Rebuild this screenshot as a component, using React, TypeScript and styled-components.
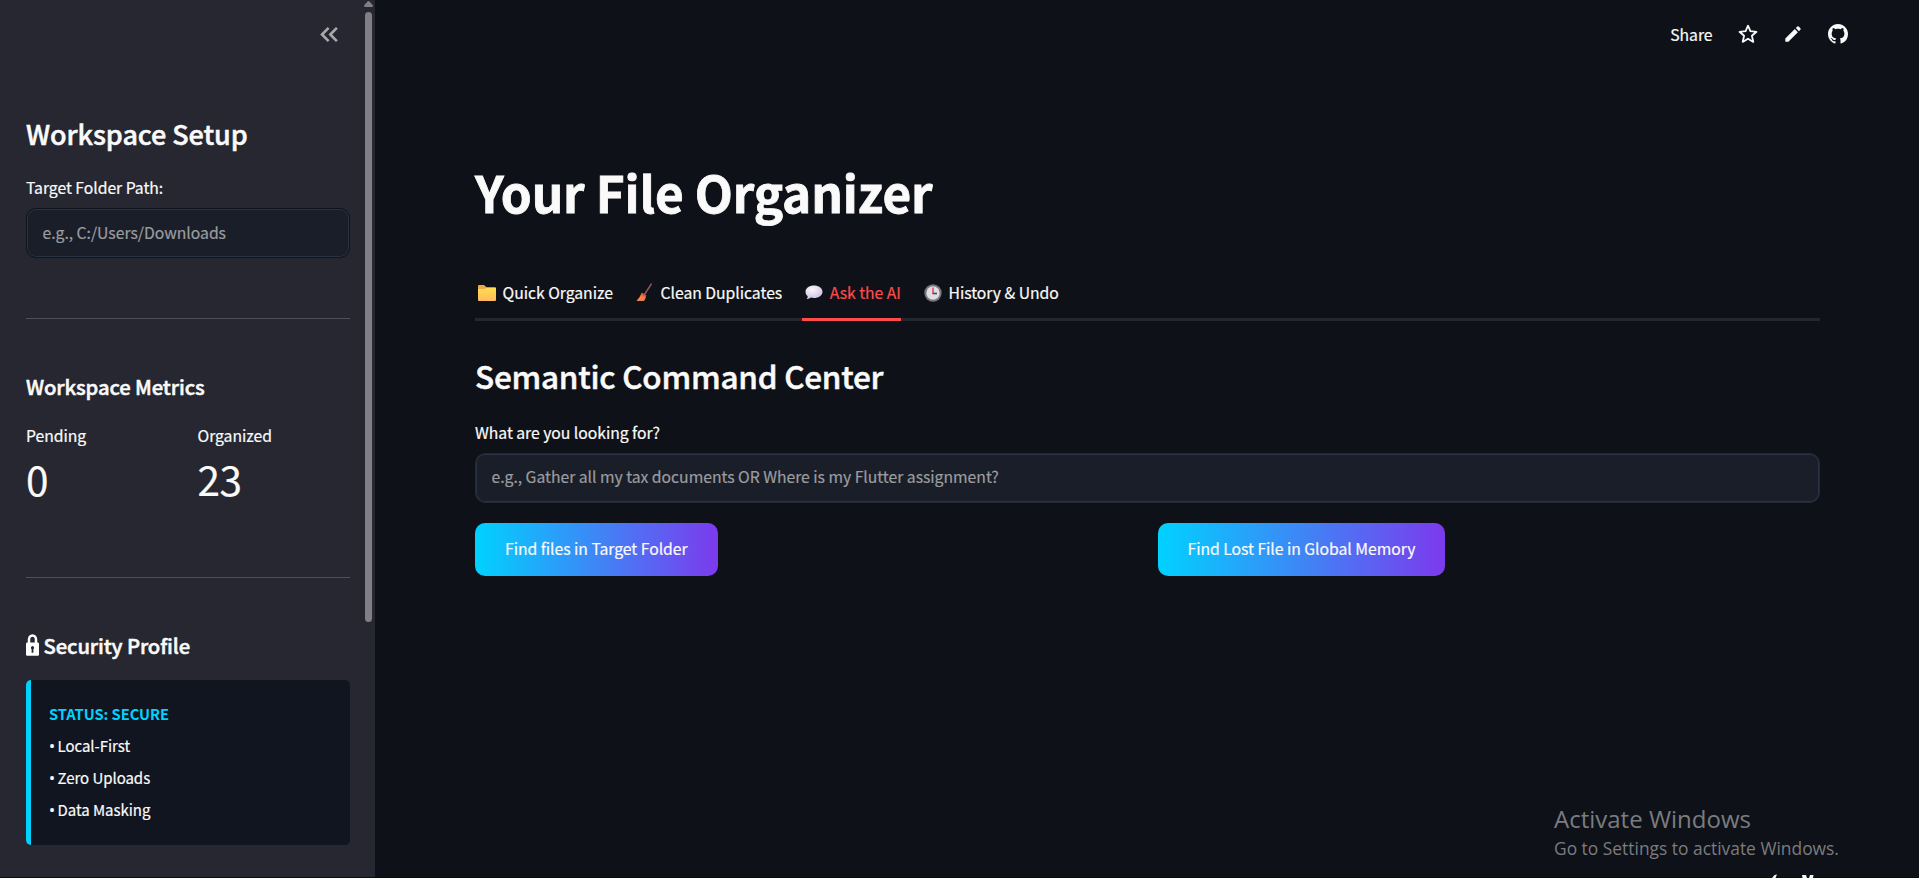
import React from "react";
import styled, { createGlobalStyle, css } from "styled-components";

const GlobalStyle = createGlobalStyle`
  * { box-sizing: border-box; }
  body {
    margin: 0;
    background: #0e1117;
    color: #fafafa;
    font-family: "Noto Sans CJK SC", "Open Sans", sans-serif;
    font-size: 15.75px;
    line-height: 27px;
    letter-spacing: -0.04px;
    -webkit-text-stroke: 0.2px currentColor;
    overflow: hidden;
  }
  h1, h2, h3, p { margin: 0; }
`;

const semibold = css`
  font-weight: 500;
  -webkit-text-stroke: 0.5px currentColor;
`;

const Page = styled.div`
  position: relative;
  display: flex;
  width: 100vw;
  height: 100vh;
  overflow: hidden;
`;

/* ---------- sidebar ---------- */

const Sidebar = styled.aside`
  display: flex;
  flex: 0 0 375px;
  background: #262730;
`;

const SidebarContent = styled.div`
  display: flex;
  flex: 1;
  flex-direction: column;
  padding: 0 14px 0 26px;
`;

const SidebarHeader = styled.div`
  display: flex;
  justify-content: flex-end;
  align-items: flex-start;
  height: 115px;
  padding: 27px 12px 0 0;
`;

const ScrollTrack = styled.div`
  display: flex;
  flex: 0 0 11px;
  flex-direction: column;
  align-items: flex-start;
  padding-top: 1px;
`;

const ScrollThumb = styled.div`
  width: 7px;
  height: 610px;
  margin: 5px 0 0 1px;
  border-radius: 4px;
  background: #7f7f85;
`;

const SidebarTitle = styled.h2`
  ${semibold}
  font-size: 27px;
  line-height: 37px;
  letter-spacing: -0.08px;
  margin-bottom: 22px;
`;

const SidebarHeading = styled.h3`
  ${semibold}
  display: flex;
  align-items: flex-start;
  font-size: 20.25px;
  line-height: 27px;
  letter-spacing: -0.12px;
`;

const Label = styled.label`
  display: block;
  margin-bottom: 7px;
`;

const Field = styled.div<{ $outline: string; $top: number }>`
  height: 50px;
  padding: ${(p) => p.$top}px 14px 0;
  border: 1px solid ${(p) => p.$outline};
  border-radius: 10px;
  background: #1a1e29;
  box-shadow: inset 0 0 0 1px #2a3344;
`;

const Input = styled.input`
  display: block;
  width: 100%;
  height: 27px;
  padding: 0 0 0 1.5px;
  border: 0;
  outline: 0;
  background: transparent;
  color: #fafafa;
  font: inherit;
  letter-spacing: -0.03px;
  &::placeholder {
    color: #9b9c9f;
    opacity: 1;
  }
`;

const Divider = styled.hr<{ $above: number; $below: number }>`
  width: 100%;
  height: 1px;
  margin: ${(p) => p.$above}px 0 ${(p) => p.$below}px;
  border: 0;
  background: #4d4e56;
`;

const Metrics = styled.div`
  display: grid;
  grid-template-columns: 1fr 1fr;
  column-gap: 19px;
  margin-top: 22px;
`;

const MetricValue = styled.div`
  margin-top: 2px;
  font-size: 40.5px;
  line-height: 55px;
  letter-spacing: -0.5px;
`;

const LockSlot = styled.span`
  display: flex;
  width: 17.5px;
  padding-top: 2px;
`;

const StatusCard = styled.div`
  display: flex;
  flex-direction: column;
  gap: 1px;
  height: 165px;
  margin-top: 21px;
  padding: 18px 18px 0;
  border-left: 5px solid #00d2ff;
  border-radius: 5px;
  background: #111520;
  font-size: 15px;
  line-height: 31px;
`;

const StatusTitle = styled.p`
  color: #00d2ff;
  font-weight: 700;
  font-size: 14.7px;
  -webkit-text-stroke: 0;
`;

const Guarantee = styled.p`
  display: flex;
  gap: 2.5px;
  height: 31px;
`;

const Bullet = styled.span`
  width: 6px;
  padding-top: 1px;
  font-family: "Open Sans", sans-serif;
  font-size: 16px;
`;

/* ---------- main area ---------- */

const Main = styled.main`
  display: flex;
  flex: 1;
  flex-direction: column;
`;

const Toolbar = styled.header`
  display: flex;
  align-items: center;
  justify-content: flex-end;
  height: 68px;
  padding-right: 71px;
`;

const ToolbarText = styled.span`
  margin: 1px 25.5px 0 0;
`;

const ToolbarIcon = styled.span<{ $gap: number }>`
  display: flex;
  margin-right: ${(p) => p.$gap}px;
`;

const Content = styled.section`
  padding: 90px 99px 0 100px;
`;

const Title = styled.h1`
  font-size: 49.5px;
  line-height: 67px;
  font-weight: 700;
  letter-spacing: -0.1px;
  -webkit-text-stroke: 0.8px currentColor;
`;

const Tabs = styled.nav`
  display: flex;
  gap: 20px;
  height: 42px;
  margin-top: 54px;
  box-shadow: inset 0 -3px 0 #26272e;
`;

const Tab = styled.div<{ $active?: boolean }>`
  display: flex;
  height: 42px;
  color: ${(p) => (p.$active ? "#ff4b4b" : "#fafafa")};
  border-bottom: 3px solid ${(p) => (p.$active ? "#ff4b4b" : "transparent")};
`;

const Emoji = styled.span`
  display: flex;
  width: 27.6px;
  padding: 4px 0 0 2px;
`;

const Heading = styled.h2`
  ${semibold}
  margin: 33px 0 23px;
  font-size: 31.5px;
  line-height: 42px;
  letter-spacing: -0.24px;
`;

const Actions = styled.div`
  display: grid;
  grid-template-columns: 1fr 1fr;
  column-gap: 20px;
  justify-items: start;
  margin-top: 20px;
`;

const ActionButton = styled.button`
  height: 53px;
  padding: 0 30px 2px;
  border: 0;
  border-radius: 10px;
  background: linear-gradient(90deg, #00d2ff 0%, #7c3aed 100%);
  color: #fafafa;
  font: inherit;
  letter-spacing: -0.04px;
  white-space: nowrap;
`;

/* ---------- desktop overlay ---------- */

const Watermark = styled.div`
  position: absolute;
  left: 1554px;
  top: 802px;
  color: #7b7c80;
  font-family: "Open Sans", sans-serif;
  letter-spacing: 0;
  -webkit-text-stroke: 0;
  white-space: nowrap;
`;

const WatermarkTitle = styled.div`
  font-size: 24px;
  line-height: 33px;
`;

const WatermarkText = styled.div`
  font-size: 17.4px;
  line-height: 27px;
`;

const EdgeLine = styled.div`
  position: absolute;
  left: 0;
  right: 0;
  bottom: 0;
  height: 1px;
  background: #0f0715;
`;

const EdgeMarks = styled.svg`
  position: absolute;
  left: 1770px;
  bottom: 0;
`;

const FolderEmoji = () => (
  <svg width="20" height="20" viewBox="0 0 20 20">
    <defs>
      <linearGradient id="folder" x1="0" y1="0" x2="0" y2="1">
        <stop offset="0" stopColor="#ffdf50" />
        <stop offset="1" stopColor="#ffb95c" />
      </linearGradient>
    </defs>
    <path d="M1 3.2Q1 2 2 2H7L9.5 4.2H18Q19 4.2 19 5.2V9H1Z" fill="#f0a93e" />
    <path d="M1 6H7.5L9.5 4.8H18Q19 4.8 19 5.8V17Q19 18 18 18H2Q1 18 1 17Z" fill="url(#folder)" />
  </svg>
);

const BroomEmoji = () => (
  <svg width="20" height="20" viewBox="0 0 20 20">
    <path d="M16.2 1.2 9.8 11" stroke="#8a5358" strokeWidth="1.6" strokeLinecap="round" />
    <path d="M6.8 9.8 11.2 12.6Q10.8 16 9 18H1.4Q4.8 14.6 6.8 9.8Z" fill="#ee7642" />
    <path d="M6.8 9.8 11.2 12.6 10.9 14 6.1 11.3Z" fill="#d34d43" />
    <path d="M3.5 17.5 6.5 13.5M6.5 17.5 8.5 14.5" stroke="#ffa35f" strokeWidth=".8" />
  </svg>
);

const BubbleEmoji = () => (
  <svg width="20" height="20" viewBox="0 0 20 20">
    <defs>
      <radialGradient id="bubble" cx=".4" cy=".3" r=".75">
        <stop offset="0" stopColor="#fbf7ff" />
        <stop offset="1" stopColor="#cdbfe0" />
      </radialGradient>
    </defs>
    <path
      d="M10 2.5C14.8 2.5 18.5 5.1 18.5 8.7S14.8 15 10 15C8.9 15 7.9 14.9 6.9 14.6 5.7 15.7 4.1 16.3 2.7 16 3.5 15.2 3.8 14.2 3.6 13.1 2.2 12 1.5 10.6 1.5 8.7 1.5 5.1 5.2 2.5 10 2.5Z"
      fill="url(#bubble)"
    />
  </svg>
);

const ClockEmoji = () => (
  <svg width="20" height="20" viewBox="0 0 20 20">
    <circle cx="10" cy="10" r="8.7" fill="#77747c" />
    <circle cx="10" cy="10" r="6.7" fill="#e0dce4" />
    <path d="M10 10.3V4.5" stroke="#e8425d" strokeWidth="1.5" />
    <path d="M9.5 10.5H14" stroke="#4b4360" strokeWidth="1.6" />
  </svg>
);

const LockIcon = () => (
  <svg width="13" height="22" viewBox="0 0 13 22">
    <path d="M3 10V5.3A3.5 3.9 0 0 1 10 5.3V10" fill="none" stroke="#fff" strokeWidth="2.5" />
    <rect y="8.5" width="13" height="13.3" rx="1.2" fill="#fff" />
    <path d="M6.5 12A1.8 1.8 0 0 0 5.6 15.2V18.8H7.4V15.2A1.8 1.8 0 0 0 6.5 12Z" fill="#262730" />
  </svg>
);

const CollapseIcon = () => (
  <svg width="18" height="15" viewBox="0 0 18 15" fill="none" stroke="#a8a9ac" strokeWidth="2.6">
    <path d="M8.6 .9 2 7.5 8.6 14.1M16.9 .9 10.3 7.5 16.9 14.1" />
  </svg>
);

const ScrollArrow = () => (
  <svg width="9" height="6" viewBox="0 0 9 6">
    <path d="M3.5 .5Q4.5 -.3 5.5 .5L9 4.5Q9 6 8 6H1Q0 6 0 4.5Z" fill="#7f7f85" />
  </svg>
);

const StarIcon = () => (
  <svg width="20" height="20" viewBox="0 0 20 20">
    <path
      d="M10 1.7 12.4 7.2 18.5 7.8 13.9 11.8 15.3 17.9 10 14.7 4.7 17.9 6.1 11.8 1.5 7.8 7.6 7.2Z"
      fill="none"
      stroke="#fafafa"
      strokeWidth="1.8"
      strokeLinejoin="round"
    />
  </svg>
);

const PencilIcon = () => (
  <svg width="16" height="16" viewBox="0 0 16 16" fill="#fafafa">
    <path d="M9.8 3.1 12.9 6.2 3.4 15.7H.3V12.6Z" />
    <path d="M10.8 2.1 12.3 .6Q13 0 13.7 .6L15.4 2.3Q16 3 15.4 3.7L13.9 5.2Z" />
  </svg>
);

const GitHubIcon = () => (
  <svg width="20" height="20" viewBox="0 0 16 16" fill="#fafafa">
    <path d="M8 0C3.58 0 0 3.58 0 8c0 3.54 2.29 6.53 5.47 7.59.4.07.55-.17.55-.38 0-.19-.01-.82-.01-1.49-2.01.37-2.53-.49-2.69-.94-.09-.23-.48-.94-.82-1.13-.28-.15-.68-.52-.01-.53.63-.01 1.08.58 1.23.82.72 1.21 1.87.87 2.33.66.07-.52.28-.87.51-1.07-1.78-.2-3.64-.89-3.64-3.95 0-.87.31-1.59.82-2.15-.08-.2-.36-1.02.08-2.12 0 0 .67-.21 2.2.82.64-.18 1.32-.27 2-.27s1.36.09 2 .27c1.53-1.04 2.2-.82 2.2-.82.44 1.1.16 1.92.08 2.12.51.56.82 1.27.82 2.15 0 3.07-1.87 3.75-3.65 3.95.29.25.54.73.54 1.48 0 1.07-.01 1.93-.01 2.2 0 .21.15.46.55.38A8.01 8.01 0 0 0 16 8c0-4.42-3.58-8-8-8Z" />
  </svg>
);

const tabs = [
  { label: "Quick Organize", icon: <FolderEmoji /> },
  { label: "Clean Duplicates", icon: <BroomEmoji /> },
  { label: "Ask the AI", icon: <BubbleEmoji />, active: true },
  { label: "History & Undo", icon: <ClockEmoji /> },
];

const metrics = [
  { label: "Pending", value: 0 },
  { label: "Organized", value: 23 },
];

const guarantees = ["Local-First", "Zero Uploads", "Data Masking"];

export default function App() {
  return (
    <Page>
      <GlobalStyle />
      <Sidebar>
        <SidebarContent>
          <SidebarHeader>
            <CollapseIcon />
          </SidebarHeader>
          <SidebarTitle>Workspace Setup</SidebarTitle>
          <Label htmlFor="folder-path">Target Folder Path:</Label>
          <Field $outline="#10131a" $top={10}>
            <Input id="folder-path" placeholder="e.g., C:/Users/Downloads" />
          </Field>
          <Divider $above={60} $below={54} />
          <SidebarHeading>Workspace Metrics</SidebarHeading>
          <Metrics>
            {metrics.map((m) => (
              <div key={m.label}>
                <div>{m.label}</div>
                <MetricValue>{m.value}</MetricValue>
              </div>
            ))}
          </Metrics>
          <Divider $above={71} $below={54} />
          <SidebarHeading>
            <LockSlot>
              <LockIcon />
            </LockSlot>
            Security Profile
          </SidebarHeading>
          <StatusCard>
            <StatusTitle>STATUS: SECURE</StatusTitle>
            {guarantees.map((g) => (
              <Guarantee key={g}>
                <Bullet>•</Bullet>
                {g}
              </Guarantee>
            ))}
          </StatusCard>
        </SidebarContent>
        <ScrollTrack>
          <ScrollArrow />
          <ScrollThumb />
        </ScrollTrack>
      </Sidebar>

      <Main>
        <Toolbar>
          <ToolbarText>Share</ToolbarText>
          <ToolbarIcon $gap={27}>
            <StarIcon />
          </ToolbarIcon>
          <ToolbarIcon $gap={27}>
            <PencilIcon />
          </ToolbarIcon>
          <ToolbarIcon $gap={0}>
            <GitHubIcon />
          </ToolbarIcon>
        </Toolbar>
        <Content>
          <Title>Your File Organizer</Title>
          <Tabs>
            {tabs.map((t) => (
              <Tab key={t.label} $active={t.active}>
                <Emoji>{t.icon}</Emoji>
                {t.label}
              </Tab>
            ))}
          </Tabs>
          <Heading>Semantic Command Center</Heading>
          <Label htmlFor="query">What are you looking for?</Label>
          <Field $outline="#262730" $top={9}>
            <Input
              id="query"
              placeholder="e.g., Gather all my tax documents OR Where is my Flutter assignment?"
            />
          </Field>
          <Actions>
            <ActionButton>Find files in Target Folder</ActionButton>
            <ActionButton>Find Lost File in Global Memory</ActionButton>
          </Actions>
        </Content>
      </Main>

      <Watermark>
        <WatermarkTitle>Activate Windows</WatermarkTitle>
        <WatermarkText>Go to Settings to activate Windows.</WatermarkText>
      </Watermark>
      <EdgeLine />
      <EdgeMarks width="46" height="4" viewBox="0 0 46 4">
        <path d="M2 4 4.5 1 7 .5 5.5 4ZM32 1H36L37 4H32.5ZM39 4 40 1H43.5L43 4Z" fill="#f4f4f4" />
      </EdgeMarks>
    </Page>
  );
}
